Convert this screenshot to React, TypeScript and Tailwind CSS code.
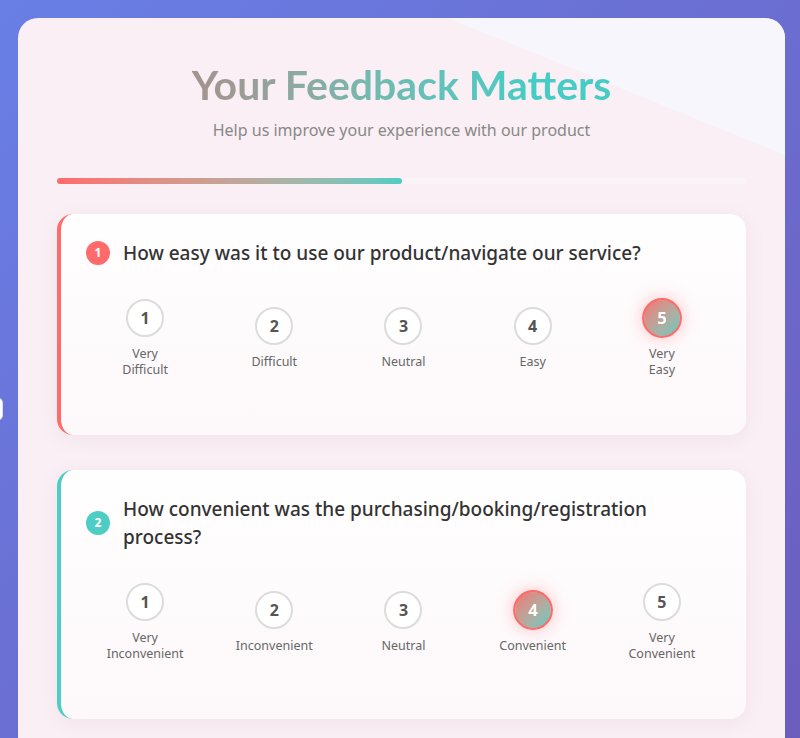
import React, { useState } from 'react';

type Question = {
    id: number;
    text: string;
    accent: 'red' | 'teal';
    labels: string[];
    selected: number;
};

const questions: Question[] = [
    {
        id: 1,
        text: 'How easy was it to use our product/navigate our service?',
        accent: 'red',
        labels: ['Very Difficult', 'Difficult', 'Neutral', 'Easy', 'Very Easy'],
        selected: 5,
    },
    {
        id: 2,
        text: 'How convenient was the purchasing/booking/registration process?',
        accent: 'teal',
        labels: ['Very Inconvenient', 'Inconvenient', 'Neutral', 'Convenient', 'Very Convenient'],
        selected: 4,
    },
];

const QuestionCard: React.FC<{ q: Question }> = ({ q }) => {
    const [value, setValue] = useState(q.selected);
    const isRed = q.accent === 'red';

    return (
        <div
            className={`rounded-2xl border-l-4 bg-gradient-to-b from-[#fffeff] to-[#fdf8fa] px-[25px] pt-[25px] pb-[57px] shadow-[0_4px_18px_rgba(200,160,180,0.12)] ${
                isRed ? 'border-[#ff6b6b]' : 'border-[#4ecdc4]'
            }`}
        >
            {/* question title */}
            <div className="flex items-center gap-[13px]">
                <span
                    className={`flex h-[24px] w-[24px] shrink-0 items-center justify-center rounded-full text-[12px] font-bold text-white ${
                        isRed ? 'bg-[#ff6b6b]' : 'bg-[#4ecdc4]'
                    }`}
                >
                    {q.id}
                </span>
                <h3 className="text-[19px] font-medium leading-[28px] text-[#333]">{q.text}</h3>
            </div>

            {/* rating scale */}
            <div className="mt-[32px] grid grid-cols-5 items-center gap-[11px]">
                {q.labels.map((label, i) => {
                    const n = i + 1;
                    const active = n === value;
                    return (
                        <button
                            key={n}
                            onClick={() => setValue(n)}
                            className="flex flex-col items-center"
                        >
                            <span
                                className={`flex h-[38px] w-[38px] items-center justify-center rounded-full border-2 text-[16px] font-bold ${
                                    active
                                        ? 'scale-105 border-[#ff6b6b] bg-gradient-to-br from-[#f07272] to-[#4ecdc4] text-white shadow-[0_0_16px_rgba(255,107,107,0.4)]'
                                        : 'border-[#dcdcdc] bg-white text-[#555]'
                                }`}
                            >
                                {n}
                            </span>
                            <span className="mt-[9px] w-min text-center text-[12.5px] leading-[16px] text-[#666]">
                                {label}
                            </span>
                        </button>
                    );
                })}
            </div>
        </div>
    );
};

const App: React.FC = () => {
    return (
        <div
            className="relative min-h-screen overflow-hidden bg-gradient-to-br from-[#687fe6] to-[#6c5cbc] pt-[18px] pl-[18px] pr-[15px]"
            style={{ fontFamily: '"Noto Sans", sans-serif' }}
        >
            {/* partly hidden side tab */}
            <div className="absolute left-[-20px] top-[397px] h-[24px] w-[23px] rounded-md border border-[#dcdcec] bg-white" />

            <div className="relative overflow-hidden rounded-[20px] bg-[#f9eff4] px-[39px] pt-[43px] pb-[60px]">
                {/* lighter diagonal corner */}
                <div className="absolute inset-0 bg-[#f7f6fc] [clip-path:polygon(56%_0,100%_0,100%_137px)]" />

                <div className="relative">
                    <div className="text-center">
                        <h1
                            className="inline-block bg-gradient-to-r from-[#a5918e] via-[#6fbbb1] via-45% to-[#46ccc5] to-80% bg-clip-text text-[41px] font-bold leading-[48px] text-transparent"
                            style={{ fontFamily: 'Lato, "Noto Sans", sans-serif' }}
                        >
                            Your Feedback Matters
                        </h1>
                        <p className="mt-[9px] text-[16px] leading-[24px] text-[#888]">
                            Help us improve your experience with our product
                        </p>
                    </div>

                    {/* progress */}
                    <div className="mt-[36px] h-[6px] w-full rounded-full bg-[#fbf4f7]">
                        <div className="h-full w-1/2 rounded-full bg-gradient-to-r from-[#ff6b6b] to-[#4ecdc4]" />
                    </div>

                    <div className="mt-[30px] flex flex-col gap-[35px]">
                        {questions.map(q => (
                            <QuestionCard key={q.id} q={q} />
                        ))}
                    </div>
                </div>
            </div>
        </div>
    );
};

export default App;
